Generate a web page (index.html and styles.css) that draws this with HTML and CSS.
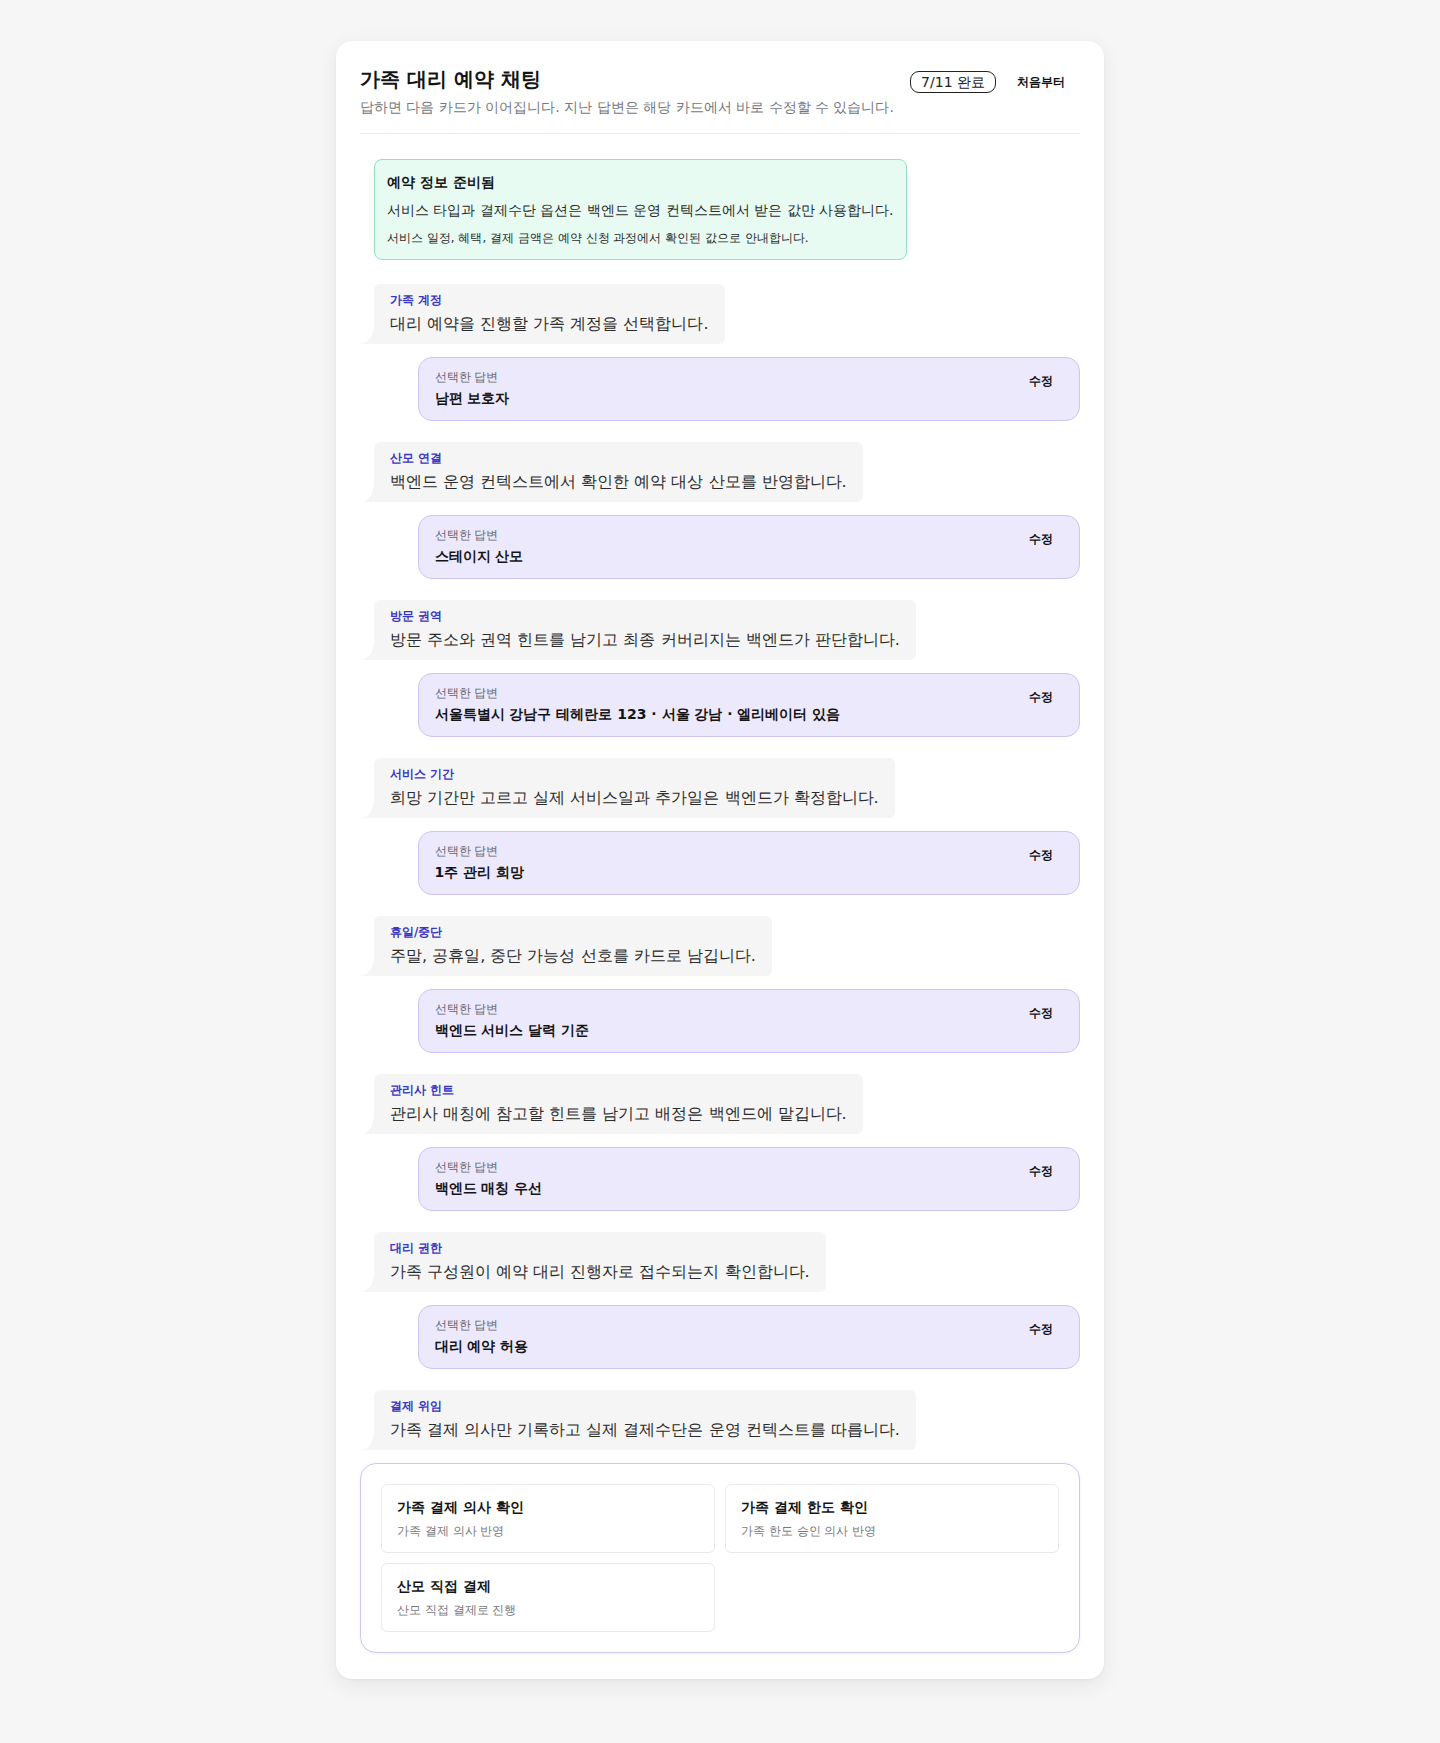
FILE: index.html
```html
<!DOCTYPE html>
<html>
<head>
<meta charset="utf-8">
<title>가족 대리 예약 채팅</title>
<link rel="stylesheet" href="styles.css">
</head>
<body>
<main class="card">
  <header class="header">
    <div class="header-text">
      <h1 class="title">가족 대리 예약 채팅</h1>
      <p class="subtitle">답하면 다음 카드가 이어집니다. 지난 답변은 해당 카드에서 바로 수정할 수 있습니다.</p>
    </div>
    <div class="header-actions">
      <span class="badge">7/11 완료</span>
      <button class="reset-btn" type="button">처음부터</button>
    </div>
  </header>

  <section class="chat">
    <div class="notice">
      <div class="notice-title">예약 정보 준비됨</div>
      <div class="notice-text">서비스 타입과 결제수단 옵션은 백엔드 운영 컨텍스트에서 받은 값만 사용합니다.</div>
      <div class="notice-small">서비스 일정, 혜택, 결제 금액은 예약 신청 과정에서 확인된 값으로 안내합니다.</div>
    </div>

    <div class="turn">
      <div class="bubble"><div class="bubble-label">가족 계정</div><div class="bubble-text">대리 예약을 진행할 가족 계정을 선택합니다.</div></div>
      <div class="answer"><div class="answer-body"><div class="answer-label">선택한 답변</div><div class="answer-value">남편 보호자</div></div><button class="edit-btn" type="button">수정</button></div>
    </div>

    <div class="turn">
      <div class="bubble"><div class="bubble-label">산모 연결</div><div class="bubble-text">백엔드 운영 컨텍스트에서 확인한 예약 대상 산모를 반영합니다.</div></div>
      <div class="answer"><div class="answer-body"><div class="answer-label">선택한 답변</div><div class="answer-value">스테이지 산모</div></div><button class="edit-btn" type="button">수정</button></div>
    </div>

    <div class="turn">
      <div class="bubble"><div class="bubble-label">방문 권역</div><div class="bubble-text">방문 주소와 권역 힌트를 남기고 최종 커버리지는 백엔드가 판단합니다.</div></div>
      <div class="answer"><div class="answer-body"><div class="answer-label">선택한 답변</div><div class="answer-value">서울특별시 강남구 테헤란로 123 · 서울 강남 · 엘리베이터 있음</div></div><button class="edit-btn" type="button">수정</button></div>
    </div>

    <div class="turn">
      <div class="bubble"><div class="bubble-label">서비스 기간</div><div class="bubble-text">희망 기간만 고르고 실제 서비스일과 추가일은 백엔드가 확정합니다.</div></div>
      <div class="answer"><div class="answer-body"><div class="answer-label">선택한 답변</div><div class="answer-value">1주 관리 희망</div></div><button class="edit-btn" type="button">수정</button></div>
    </div>

    <div class="turn">
      <div class="bubble"><div class="bubble-label">휴일/중단</div><div class="bubble-text">주말, 공휴일, 중단 가능성 선호를 카드로 남깁니다.</div></div>
      <div class="answer"><div class="answer-body"><div class="answer-label">선택한 답변</div><div class="answer-value">백엔드 서비스 달력 기준</div></div><button class="edit-btn" type="button">수정</button></div>
    </div>

    <div class="turn">
      <div class="bubble"><div class="bubble-label">관리사 힌트</div><div class="bubble-text">관리사 매칭에 참고할 힌트를 남기고 배정은 백엔드에 맡깁니다.</div></div>
      <div class="answer"><div class="answer-body"><div class="answer-label">선택한 답변</div><div class="answer-value">백엔드 매칭 우선</div></div><button class="edit-btn" type="button">수정</button></div>
    </div>

    <div class="turn">
      <div class="bubble"><div class="bubble-label">대리 권한</div><div class="bubble-text">가족 구성원이 예약 대리 진행자로 접수되는지 확인합니다.</div></div>
      <div class="answer"><div class="answer-body"><div class="answer-label">선택한 답변</div><div class="answer-value">대리 예약 허용</div></div><button class="edit-btn" type="button">수정</button></div>
    </div>

    <div class="turn">
      <div class="bubble"><div class="bubble-label">결제 위임</div><div class="bubble-text">가족 결제 의사만 기록하고 실제 결제수단은 운영 컨텍스트를 따릅니다.</div></div>
      <div class="options">
        <button class="option" type="button"><span class="option-title">가족 결제 의사 확인</span><span class="option-sub">가족 결제 의사 반영</span></button>
        <button class="option" type="button"><span class="option-title">가족 결제 한도 확인</span><span class="option-sub">가족 한도 승인 의사 반영</span></button>
        <button class="option" type="button"><span class="option-title">산모 직접 결제</span><span class="option-sub">산모 직접 결제로 진행</span></button>
      </div>
    </div>
  </section>
</main>
</body>
</html>
```

FILE: styles.css
```css
* {
  box-sizing: border-box;
}

html, body {
  margin: 0;
  padding: 0;
}

body {
  background: #f6f6f7;
  font-family: "DejaVu Sans", sans-serif;
  color: #222;
  padding: 41px 0 64px;
}

.card {
  width: 768px;
  margin: 0 auto;
  background: #ffffff;
  border-radius: 16px;
  padding: 24px 24px 26px;
  box-shadow: 0 6px 22px rgba(0, 0, 0, 0.07), 0 1px 3px rgba(0, 0, 0, 0.04);
}

.header {
  display: flex;
  justify-content: space-between;
  align-items: flex-start;
  padding-bottom: 16px;
  border-bottom: 1px solid #e9e9ec;
}

.title {
  margin: 0;
  font-size: 20px;
  line-height: 28px;
  font-weight: 700;
  color: #141414;
}

.subtitle {
  margin: 4px 0 0;
  font-size: 14px;
  line-height: 20px;
  color: #74767c;
}

.header-actions {
  display: flex;
  align-items: center;
  gap: 6px;
  margin-top: 5px;
}

.badge {
  display: inline-block;
  border: 1px solid #222;
  border-radius: 9px;
  padding: 1px 10px;
  font-size: 14px;
  line-height: 18px;
  color: #222;
}

.reset-btn {
  border: none;
  background: transparent;
  font-family: inherit;
  font-size: 12px;
  line-height: 16px;
  font-weight: 700;
  color: #111;
  padding: 4px 15px;
  cursor: pointer;
}

.chat {
  display: flex;
  flex-direction: column;
  gap: 21px;
  padding-top: 25px;
}

.notice {
  align-self: flex-start;
  margin-left: 14px;
  margin-bottom: 3px;
  background: #e7fbf3;
  border: 1px solid #8fe2c3;
  border-radius: 8px;
  padding: 12px 12px;
  display: flex;
  flex-direction: column;
  gap: 8px;
}

.notice-title {
  font-size: 14px;
  line-height: 20px;
  font-weight: 700;
  color: #151515;
}

.notice-text {
  font-size: 14px;
  line-height: 20px;
  color: #2a2a2a;
}

.notice-small {
  font-size: 12px;
  line-height: 18px;
  color: #2a2a2a;
  margin-top: 1px;
}

.turn {
  display: flex;
  flex-direction: column;
  gap: 13px;
}

.bubble {
  position: relative;
  align-self: flex-start;
  margin-left: 14px;
  background: #f5f5f5;
  border-radius: 6px 6px 6px 0;
  padding: 8px 16px;
}

.bubble::before {
  content: "";
  position: absolute;
  left: -13px;
  bottom: 0;
  width: 13px;
  height: 18px;
  background: radial-gradient(ellipse 13px 18px at 0 0, transparent 97%, #f5f5f5 100%);
}

.bubble-label {
  font-size: 12px;
  line-height: 16px;
  font-weight: 700;
  color: #3b35c4;
}

.bubble-text {
  margin-top: 4px;
  font-size: 16px;
  line-height: 24px;
  color: #2b2b2b;
}

.answer {
  align-self: flex-end;
  width: 92%;
  display: flex;
  justify-content: space-between;
  align-items: flex-start;
  background: #ece9fd;
  border: 1px solid #cbc5f2;
  border-radius: 14px;
  padding: 11px 16px;
}

.answer-label {
  font-size: 12px;
  line-height: 16px;
  color: #66666e;
}

.answer-value {
  margin-top: 3px;
  font-size: 14px;
  line-height: 21px;
  font-weight: 700;
  color: #141414;
}

.edit-btn {
  border: none;
  background: transparent;
  font-family: inherit;
  font-size: 12px;
  line-height: 16px;
  font-weight: 700;
  color: #111;
  padding: 4px 10px;
  cursor: pointer;
}

.options {
  display: grid;
  grid-template-columns: 1fr 1fr;
  gap: 10px;
  border: 1px solid #cdc7f1;
  border-radius: 16px;
  padding: 20px;
  background: #fff;
  box-shadow: 0 1px 3px rgba(80, 70, 160, 0.08);
}

.option {
  display: flex;
  flex-direction: column;
  align-items: flex-start;
  text-align: left;
  background: #fff;
  border: 1px solid #e9e9ee;
  border-radius: 6px;
  padding: 12px 15px;
  font-family: inherit;
  cursor: pointer;
}

.option-title {
  font-size: 14px;
  line-height: 21px;
  font-weight: 700;
  color: #141414;
}

.option-sub {
  margin-top: 4px;
  font-size: 12px;
  line-height: 18px;
  color: #77777d;
}
```
